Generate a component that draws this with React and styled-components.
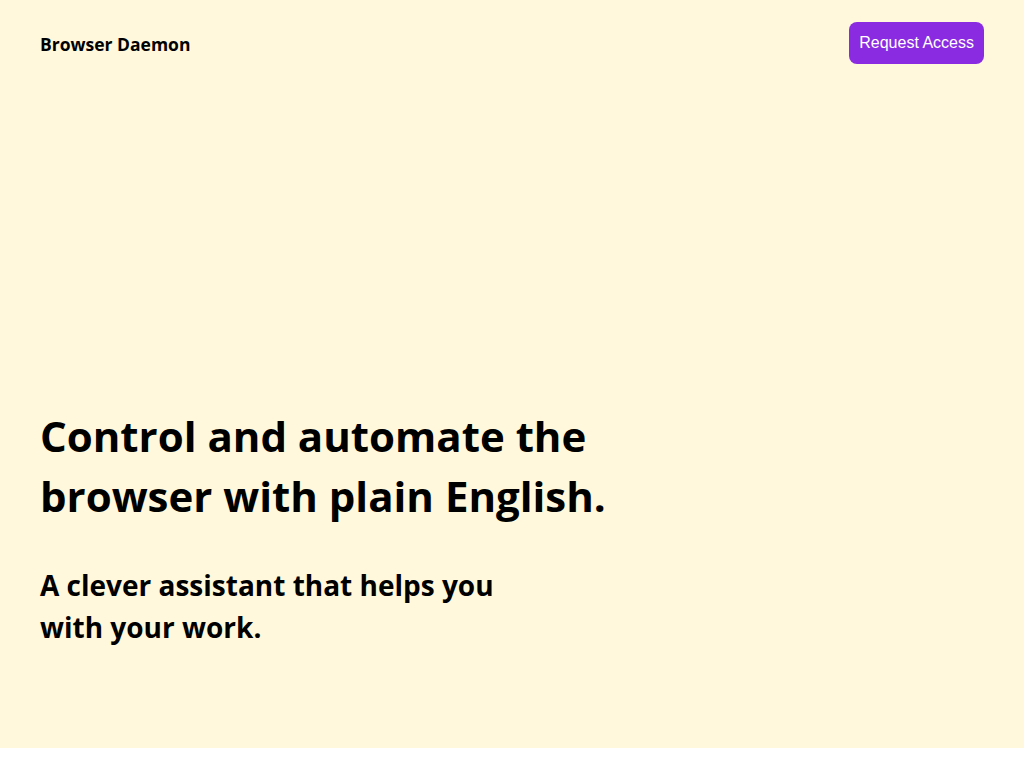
import React from "react";
import styled, { createGlobalStyle } from "styled-components";

const Global = createGlobalStyle`
  html, body { margin: 0; padding: 0; background: #ffffff; }
  body { font-family: "Open Sans", "Noto Sans", sans-serif; color: #000; }
  * { box-sizing: border-box; }
`;

const Page = styled.div`
  height: 748px;
  background: #fff8dc;
  display: flex;
  flex-direction: column;
  padding: 0 40px;
`;

const Header = styled.header`
  display: flex;
  align-items: center;
  justify-content: space-between;
  padding-top: 22px;
`;

const Brand = styled.div`
  font-size: 17.5px;
  font-weight: 700;
  padding-top: 2px;
`;

const Button = styled.button`
  font-family: "Liberation Sans", Arial, sans-serif;
  font-size: 16px;
  color: #fff;
  background: #8a2be2;
  border: none;
  border-radius: 8px;
  padding: 12px 10px;
  line-height: 18px;
  cursor: pointer;
`;

const Hero = styled.main`
  flex: 1;
  display: flex;
  flex-direction: column;
  justify-content: flex-end;
  padding-bottom: 100px;
`;

const Title = styled.h1`
  margin: 0 0 38px;
  font-size: 42px;
  line-height: 60px;
  font-weight: 700;
  max-width: 620px;
`;

const Sub = styled.p`
  margin: 0;
  font-size: 28px;
  line-height: 42px;
  font-weight: 700;
  max-width: 480px;
`;

export default function App() {
  return (
    <>
      <Global />
      <Page>
        <Header>
          <Brand>Browser Daemon</Brand>
          <Button>Request Access</Button>
        </Header>
        <Hero>
          <Title>Control and automate the browser with plain English.</Title>
          <Sub>A clever assistant that helps you with your work.</Sub>
        </Hero>
      </Page>
    </>
  );
}
